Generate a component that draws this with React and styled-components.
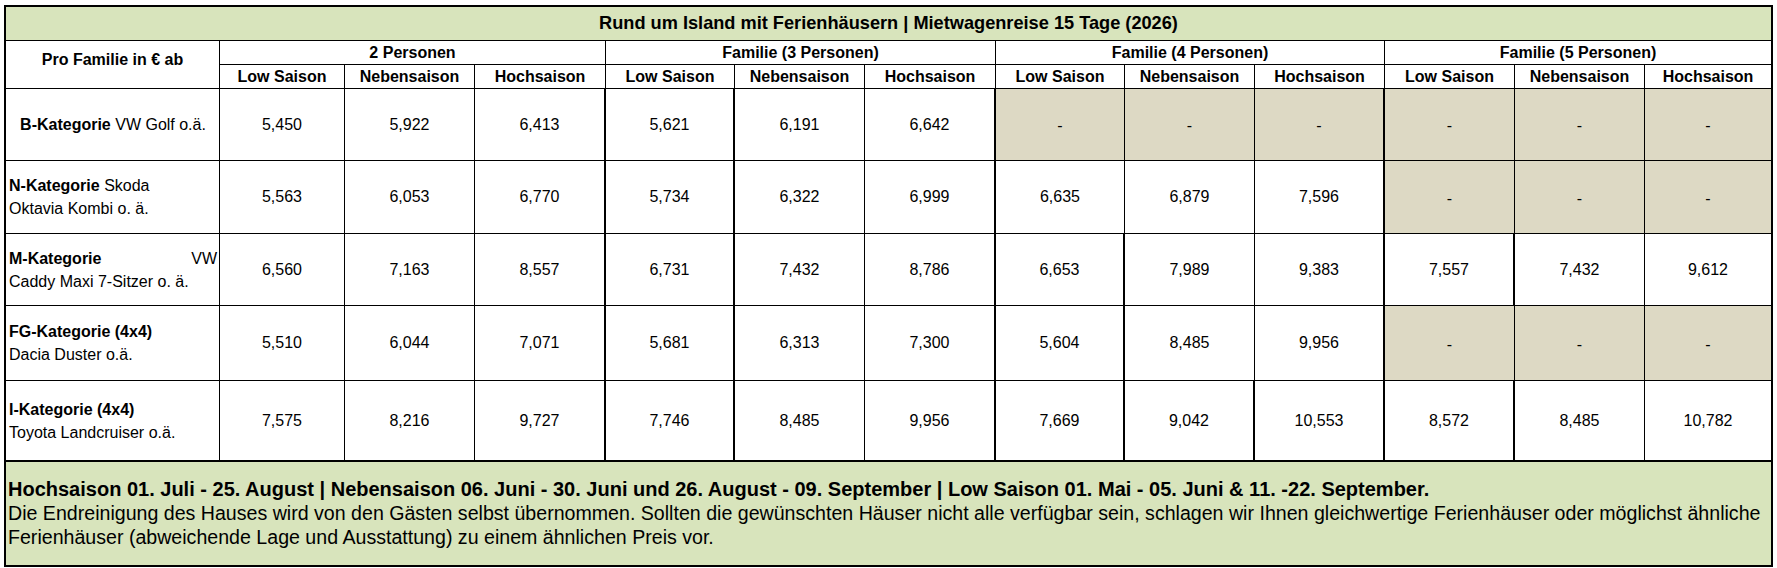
import React from "react";
import styled, { createGlobalStyle } from "styled-components";

const GlobalStyle = createGlobalStyle`
	body {
		margin: 0;
		background: #ffffff;
		font-family: "Liberation Sans", Arial, sans-serif;
		color: #000;
	}
`;

const GREEN = "#d8e4bc";
const TAN = "#ddd9c4";

const Sheet = styled.div`
	display: grid;
	grid-template-columns: 214px 125px 130px 131px 129px 130px 131px 129px 130px 130px 130px 130px 126px;
	grid-template-rows: 34px 24px 24px 72px 73px 72px 75px 80px 104px;
	width: max-content;
	margin: 5px 0 0 4px;
	border: 2px solid #000;
	box-sizing: content-box;
`;

const Cell = styled.div`
	box-sizing: border-box;
	display: flex;
	align-items: center;
	justify-content: center;
	border-bottom: 1px solid #000;
	border-right: ${({ $thick, $last }) => ($last ? "none" : $thick ? "2px solid #000" : "1px solid #000")};
	font-size: 16px;
	white-space: nowrap;
`;

const TitleCell = styled(Cell)`
	grid-column: 1 / -1;
	background: ${GREEN};
	border-right: none;
	font-size: 18.2px;
	font-weight: 700;
`;

const CornerCell = styled(Cell)`
	grid-row: span 2;
	font-weight: 700;
	padding-bottom: 10px;
`;

const GroupCell = styled(Cell)`
	grid-column: span 3;
	font-weight: 700;
`;

const SeasonCell = styled(Cell)`
	font-weight: 700;
`;

const LabelCell = styled(Cell)`
	flex-direction: column;
	align-items: ${({ $center }) => ($center ? "center" : "stretch")};
	padding: 0 2px 0 3px;
	line-height: 23px;
	b {
		font-weight: 700;
	}
`;

const SpreadLine = styled.div`
	display: flex;
	justify-content: space-between;
`;

const ValueCell = styled(Cell)`
	background: ${({ $empty }) => ($empty ? TAN : "#fff")};
	padding-top: ${({ $empty }) => ($empty ? "3px" : "0")};
`;

const Footer = styled.div`
	grid-column: 1 / -1;
	background: ${GREEN};
	border-top: 1px solid #000;
	display: flex;
	flex-direction: column;
	justify-content: center;
	padding: 0 0 2px 2px;
	font-size: 19.6px;
	line-height: 24px;
	white-space: nowrap;
`;

const FooterStrong = styled.div`
	font-weight: 700;
	font-size: 20px;
`;

const groups = ["2 Personen", "Familie (3 Personen)", "Familie (4 Personen)", "Familie (5 Personen)"];
const seasons = ["Low Saison", "Nebensaison", "Hochsaison"];

const rows = [
	{
		bold: "B-Kategorie",
		rest: " VW Golf o.ä.",
		center: true,
		thick: [2, 3, 5, 8],
		values: ["5,450", "5,922", "6,413", "5,621", "6,191", "6,642", "-", "-", "-", "-", "-", "-"],
	},
	{
		bold: "N-Kategorie",
		rest: " Skoda",
		second: "Oktavia Kombi o. ä.",
		thick: [2, 3, 5, 8],
		values: ["5,563", "6,053", "6,770", "5,734", "6,322", "6,999", "6,635", "6,879", "7,596", "-", "-", "-"],
	},
	{
		bold: "M-Kategorie",
		spread: "VW",
		second: "Caddy Maxi 7-Sitzer o. ä.",
		thick: [2, 3, 5, 6, 8, 9],
		values: ["6,560", "7,163", "8,557", "6,731", "7,432", "8,786", "6,653", "7,989", "9,383", "7,557", "7,432", "9,612"],
	},
	{
		bold: "FG-Kategorie (4x4)",
		second: "Dacia Duster o.ä.",
		thick: [2, 3, 5, 6, 8],
		values: ["5,510", "6,044", "7,071", "5,681", "6,313", "7,300", "5,604", "8,485", "9,956", "-", "-", "-"],
	},
	{
		bold: "I-Kategorie (4x4)",
		second: "Toyota Landcruiser o.ä.",
		thick: [2, 3, 5, 6, 7, 8, 9],
		values: ["7,575", "8,216", "9,727", "7,746", "8,485", "9,956", "7,669", "9,042", "10,553", "8,572", "8,485", "10,782"],
	},
];

const Label = ({ row }) => {
	if (row.center) {
		return (
			<LabelCell $center>
				<span>
					<b>{row.bold}</b>
					{row.rest}
				</span>
			</LabelCell>
		);
	}
	return (
		<LabelCell>
			{row.spread ? (
				<SpreadLine>
					<b>{row.bold}</b>
					<span>{row.spread}</span>
				</SpreadLine>
			) : (
				<div>
					<b>{row.bold}</b>
					{row.rest}
				</div>
			)}
			<div>{row.second}</div>
		</LabelCell>
	);
};

const App = () => {
	return (
		<>
			<GlobalStyle />
			<Sheet>
				<TitleCell>Rund um Island mit Ferienhäusern | Mietwagenreise 15 Tage (2026)</TitleCell>

				<CornerCell>Pro Familie in € ab</CornerCell>
				{groups.map((g, i) => (
					<GroupCell key={g} $last={i === groups.length - 1}>
						{g}
					</GroupCell>
				))}
				{groups.map((g, gi) =>
					seasons.map((s, si) => (
						<SeasonCell key={g + s} $last={gi === 3 && si === 2}>
							{s}
						</SeasonCell>
					))
				)}

				{rows.map((row) => (
					<React.Fragment key={row.bold}>
						<Label row={row} />
						{row.values.map((v, i) => (
							<ValueCell
								key={i}
								$empty={v === "-"}
								$thick={row.thick.includes(i)}
								$last={i === row.values.length - 1}
							>
								{v}
							</ValueCell>
						))}
					</React.Fragment>
				))}

				<Footer>
					<FooterStrong>
						Hochsaison 01. Juli - 25. August | Nebensaison 06. Juni - 30. Juni und 26. August - 09. September | Low Saison 01. Mai - 05. Juni &amp; 11. -22. September.
					</FooterStrong>
					<div>
						Die Endreinigung des Hauses wird von den Gästen selbst übernommen. Sollten die gewünschten Häuser nicht alle verfügbar sein, schlagen wir Ihnen gleichwertige Ferienhäuser oder möglichst ähnliche
					</div>
					<div>Ferienhäuser (abweichende Lage und Ausstattung) zu einem ähnlichen Preis vor.</div>
				</Footer>
			</Sheet>
		</>
	);
};

export default App;
